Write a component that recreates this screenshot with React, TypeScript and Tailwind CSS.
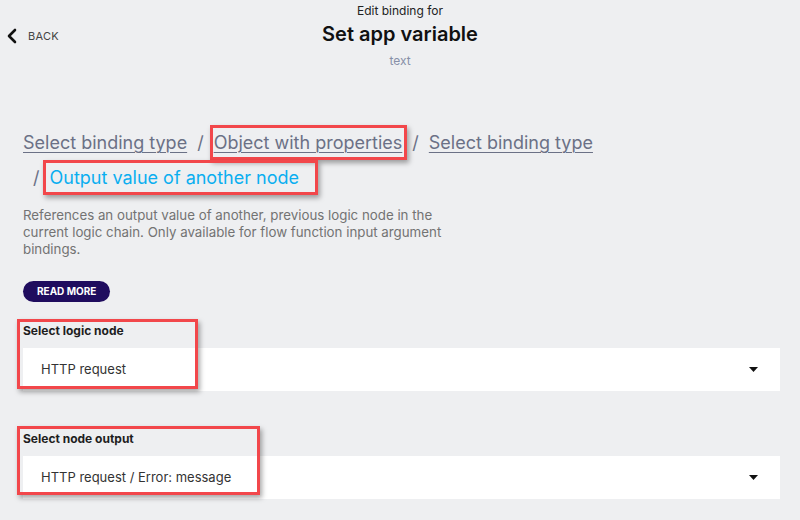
import { ChevronLeft } from "lucide-react";

const Annotation = ({ className }: { className: string }) => (
  <span
    className={`pointer-events-none absolute border-[3px] border-[#f2474b] shadow-[2px_3px_5px_rgba(0,0,0,0.35)] ${className}`}
  />
);

const SelectField = ({
  label,
  value,
  boxClass,
}: {
  label: string;
  value: string;
  boxClass: string;
}) => (
  <div className="relative">
    <div className="h-[30px] flex items-end pb-[10px] text-[12px] leading-[15px] font-bold text-[#1e1e1e]">{label}</div>
    <div className="h-[43px] bg-white flex items-center justify-between pl-[18px] pr-[22px]">
      <span className="text-[13px] text-[#333]">{value}</span>
      <svg width="9" height="5" viewBox="0 0 9 5">
        <path d="M0 0h9L4.5 5z" fill="#111" />
      </svg>
    </div>
    <Annotation className={boxClass} />
  </div>
);

export default function App() {
  return (
    <div className="w-[800px] h-[520px] bg-[#eeeff1] overflow-hidden font-['Inter',sans-serif]">
      <header className="grid grid-cols-[1fr_auto_1fr] items-start pt-[3px]">
        <button className="flex items-center gap-[4px] pl-0 mt-[21px] text-[11px] text-[#444] tracking-wide">
          <ChevronLeft size={24} strokeWidth={2.6} className="text-[#111]" />
          BACK
        </button>
        <div className="flex flex-col items-center">
          <div className="text-[12px] text-[#222] leading-[16px]">Edit binding for</div>
          <div className="text-[20px] font-semibold text-[#111] leading-[28px] mt-[1px]">Set app variable</div>
          <div className="text-[12px] text-[#8790a8] leading-[16px] mt-[5px]">text</div>
        </div>
        <div />
      </header>

      <main className="px-[23px] pt-[56px]">
        <nav className="text-[18px] leading-[35px] text-[#6b7186]">
          <a className="underline underline-offset-[3px] decoration-1">Select binding type</a>
          <span className="mx-[10px]">/</span>
          <span className="relative">
            <a className="underline underline-offset-[3px] decoration-1">Object with properties</a>
            <Annotation className="-left-[4px] -right-[5px] -top-[7px] -bottom-[7px]" />
          </span>
          <span className="mx-[10px]">/</span>
          <a className="underline underline-offset-[3px] decoration-1">Select binding type</a>
          <br />
          <span className="ml-[10px] mr-[10px]">/</span>
          <span className="relative text-[#0aaef0]">
            Output value of another node
            <Annotation className="-left-[7px] -right-[19px] -top-[7px] -bottom-[7px]" />
          </span>
        </nav>

        <p className="mt-[12px] w-[420px] text-[13.3px] leading-[17px] text-[#737373]">
          References an output value of another, previous logic node in the current logic chain. Only available for
          flow function input argument bindings.
        </p>

        <button className="mt-[23px] h-[21px] px-[14px] rounded-full bg-[#1f0c5e] text-white text-[10px] font-bold">
          READ MORE
        </button>

        <div className="mt-[16px] mr-[-3px] flex flex-col gap-[35px]">
          <SelectField
            label="Select logic node"
            value="HTTP request"
            boxClass="-left-[6px] top-[1px] w-[181px] h-[70px]"
          />
          <SelectField
            label="Select node output"
            value="HTTP request / Error: message"
            boxClass="-left-[6px] top-[0px] w-[243px] h-[69px]"
          />
        </div>
      </main>
    </div>
  );
}
